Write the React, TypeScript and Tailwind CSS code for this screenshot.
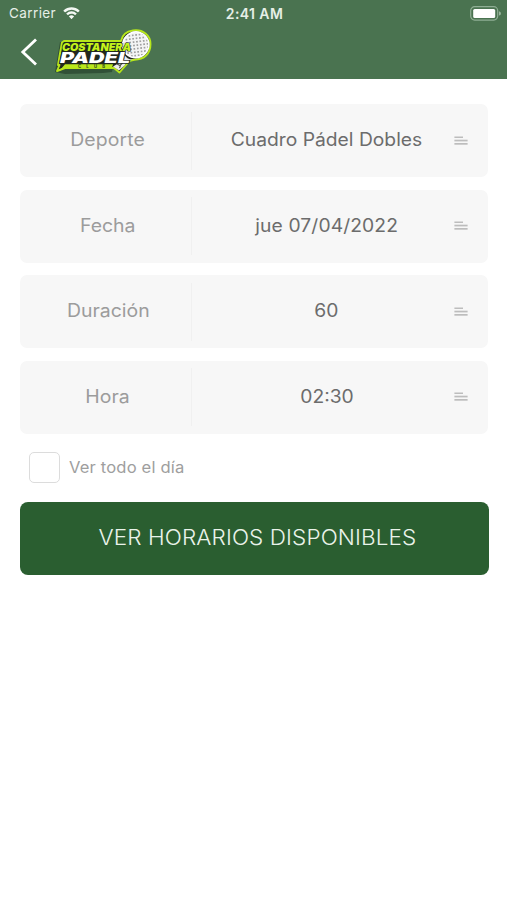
import React, { useState } from 'react';

type Field = {
	label: string;
	value: string;
	labelClass: string;
	valueClass: string;
};

const fields: Field[] = [
	{
		label: 'Deporte',
		value: 'Cuadro Pádel Dobles',
		labelClass: 'tracking-[0.1px]',
		valueClass: 'tracking-[0px]',
	},
	{
		label: 'Fecha',
		value: 'jue 07/04/2022',
		labelClass: 'tracking-[0px]',
		valueClass: 'tracking-[0.1px]',
	},
	{
		label: 'Duración',
		value: '60',
		labelClass: 'tracking-[0px]',
		valueClass: 'tracking-[0.1px]',
	},
	{
		label: 'Hora',
		value: '02:30',
		labelClass: 'tracking-[0px]',
		valueClass: 'tracking-[0px]',
	},
];

function WifiIcon() {
	return (
		<svg width="19" height="14" viewBox="0 0 18 14" fill="#f4f8f4">
			<path d="M9 2.7c2.3 0 4.5.9 6.2 2.5.1.1.3.1.4 0L17 3.9a.3.3 0 0 0 0-.4C12.6-.7 5.4-.7 1 3.5a.3.3 0 0 0 0 .4l1.4 1.3c.1.1.3.1.4 0A9 9 0 0 1 9 2.7z" />
			<path d="M9 6.8c1.3 0 2.5.5 3.4 1.3.1.1.3.1.4 0l1.4-1.3a.3.3 0 0 0 0-.4 7.6 7.6 0 0 0-10.4 0 .3.3 0 0 0 0 .4l1.4 1.3c.1.1.3.1.4 0A5.1 5.1 0 0 1 9 6.8z" />
			<path d="M11.5 9.6a.3.3 0 0 0 0-.4 3.9 3.9 0 0 0-5 0 .3.3 0 0 0 0 .4l2.3 2.3c.1.1.3.1.4 0z" />
		</svg>
	);
}

function BatteryIcon() {
	return (
		<svg width="32" height="15" viewBox="0 0 32 15">
			<rect x="0.7" y="0.7" width="27" height="13.4" rx="4" fill="none" stroke="#8fae94" strokeWidth="1.2" />
			<rect x="3.2" y="2.9" width="22" height="9" rx="1.5" fill="#fff" />
			<path d="M29 5.2c1.4.5 1.9 1.3 1.9 2.2s-.5 1.7-1.9 2.2z" fill="#9ab69e" />
		</svg>
	);
}

function Logo() {
	return (
		<svg width="104" height="50" viewBox="0 0 104 50" className="overflow-visible">
			<defs>
				<pattern id="holes" width="3.4" height="3.4" patternUnits="userSpaceOnUse" patternTransform="rotate(18)">
					<rect width="3.4" height="3.4" fill="#f4f4f4" />
					<circle cx="1.7" cy="1.7" r="0.8" fill="#7d7d7d" />
				</pattern>
			</defs>
			<path d="M8 15h58L60 45l-9 1-38 1-10-2 3-18z" fill="#1d3522" opacity="0.55" />
			{/* outline of badge and racket */}
			<path
				d="M10 15.5l2-1.5h57c1-5 5-9.5 12-10.5 10-1.5 17.500 5 17.500 13.500 0 10-6.500 15.500-16 15.700-3 .1-5 1.300-6.500 3L67.500 45.500l-5.500-4.500H13l-8 3 2.500-6H6l2-11.500z"
				fill="#22281e"
				stroke="#b7e61b"
				strokeWidth="1.9"
				strokeLinejoin="round"
			/>
			<path d="M72 27c2 4 6 6.5 11 5.5-5 .5-8 2-10.500 6l-5.500 5-6-4 7-4z" fill="#ececec" />
			<ellipse
				cx="83.8"
				cy="17.8"
				rx="13.2"
				ry="12.8"
				transform="rotate(-25 83.8 17.8)"
				fill="url(#holes)"
				stroke="#fff"
				strokeWidth="1.6"
			/>
			<path d="M65 37l3 1.5 2.5-2.5m-3 5l1-2.5" fill="none" stroke="#4b5148" strokeWidth="1.1" />
			<text
				x="10"
				y="23.8"
				textLength="69"
				lengthAdjust="spacingAndGlyphs"
				fill="#c3f21b"
				stroke="#22281e"
				strokeWidth="1.2"
				paintOrder="stroke"
				fontFamily="Inter, sans-serif"
				fontSize="10.8"
				fontWeight="900"
				fontStyle="italic"
			>
				COSTANERA
			</text>
			<text
				x="8"
				y="35.8"
				textLength="70"
				lengthAdjust="spacingAndGlyphs"
				fill="#fff"
				stroke="#22281e"
				strokeWidth="1.4"
				paintOrder="stroke"
				fontFamily="Inter, sans-serif"
				fontSize="14.8"
				fontWeight="900"
				fontStyle="italic"
			>
				PADEL
			</text>
			<path d="M13 37.2h48l-1 3.6H14l-6.5 3z" fill="#b9e81c" />
			<text x="26" y="40.6" textLength="27" fill="#35501d" fontFamily="Inter, sans-serif" fontSize="4.2" fontWeight="800">
				CLUB
			</text>
		</svg>
	);
}

function LinesIcon() {
	return (
		<svg width="14" height="10" viewBox="0 0 14 10" fill="#bdbdbd">
			<rect x="0.4" y="0.5" width="8.6" height="1.5" />
			<rect x="0.4" y="3.7" width="13.2" height="1.7" />
			<rect x="0.4" y="7" width="13.2" height="1.7" />
		</svg>
	);
}

function FieldRow({ field }: { field: Field }) {
	return (
		<button className="flex h-[73px] w-full items-center rounded-[7px] bg-[#f7f7f7] text-[18px]">
			<span className="flex h-[58px] w-[172px] items-center justify-center border-r border-[#f0f0f0] pb-[2px] pl-[5px] text-[#9c9c9c]">
				<span className={`inline-block scale-x-[1.08] ${field.labelClass}`}>{field.label}</span>
			</span>
			<span className="flex-1 pb-[2px] pl-[7px] text-center text-[#6c6c6c]">
				<span className={`inline-block scale-x-[1.07] ${field.valueClass}`}>{field.value}</span>
			</span>
			<span className="mr-5 w-[14px]">
				<LinesIcon />
			</span>
		</button>
	);
}

export default function App() {
	const [allDay, setAllDay] = useState(false);

	return (
		<div className="min-h-screen w-full bg-white font-['Inter',sans-serif]">
			<header className="h-[79px] bg-[#4a7350] text-[#e6efe7]">
				<div className="grid h-[27px] grid-cols-3 items-center pr-[5px] pl-[9px] text-[13.5px]">
					<div className="flex items-center gap-[6px]">
						<span className="tracking-[0.4px]">Carrier</span>
						<WifiIcon />
					</div>
					<span className="pr-[2px] text-center text-[14px] font-semibold tracking-[0.4px]">2:41 AM</span>
					<div className="flex justify-end">
						<BatteryIcon />
					</div>
				</div>
				<div className="flex h-[50px] items-center pl-[20px]">
					<svg width="18" height="30" viewBox="0 0 18 30" fill="none" stroke="#fff" strokeWidth="2.8">
						<path d="M16 2.5L2.8 15L16 27.5" />
					</svg>
					<div className="ml-[14px]">
						<Logo />
					</div>
				</div>
			</header>

			<main className="pt-[25px] pr-[18.5px] pl-[19.5px]">
				<div className="flex flex-col gap-[12.5px] px-[0.5px]">
					{fields.map((field) => (
						<FieldRow key={field.label} field={field} />
					))}
				</div>

				<label className="mt-[18px] ml-[9.5px] flex h-[31px] items-center gap-[9px]">
					<input
						type="checkbox"
						checked={allDay}
						onChange={() => setAllDay(!allDay)}
						className="h-[31px] w-[31px] appearance-none rounded-[5px] border border-[#dcdcdc] bg-white checked:bg-[#2a5e30]"
					/>
					<span className="origin-left scale-x-[1.07] pt-[1px] text-[15.5px] tracking-[0.15px] text-[#9e9e9e]">
						Ver todo el día
					</span>
				</label>

				<button className="mt-[19px] flex h-[73px] w-full items-center justify-center rounded-[8px] bg-[#2a5e30] pl-[6px] text-[21px] font-light text-[#eaf3ea]">
					<span className="inline-block scale-x-[1.07] tracking-[0.1px]">VER HORARIOS DISPONIBLES</span>
				</button>
			</main>
		</div>
	);
}
